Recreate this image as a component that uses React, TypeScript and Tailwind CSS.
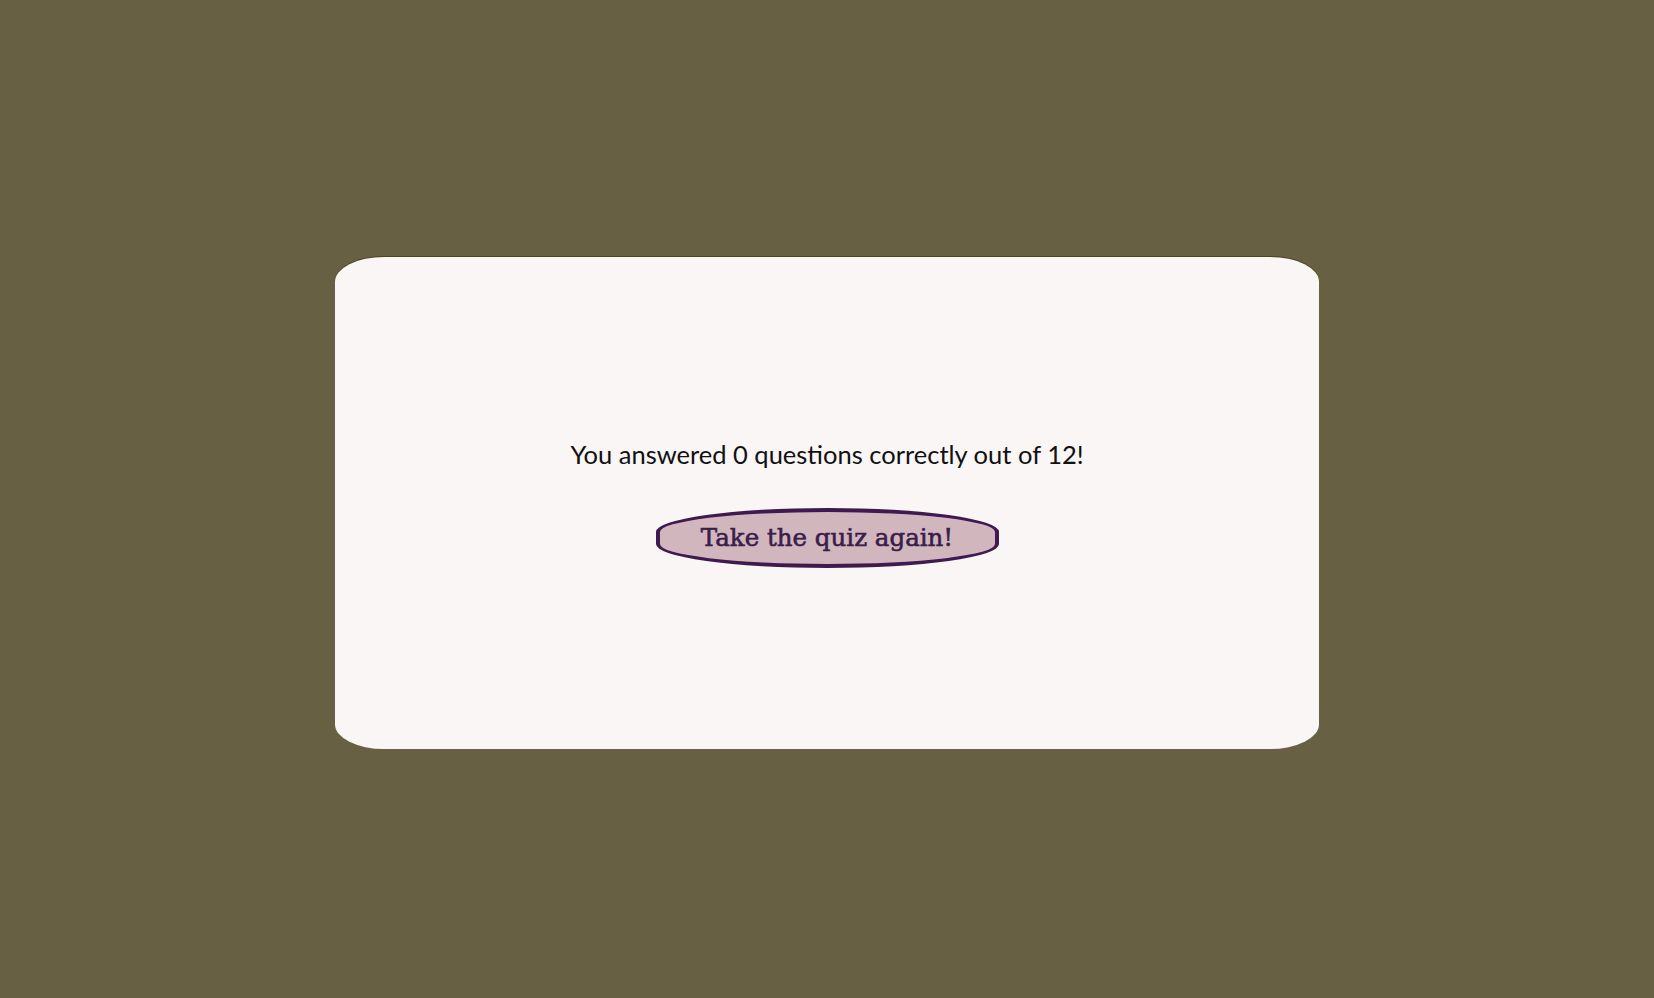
export default function App() {
  return (
    <div className="min-h-screen w-full bg-[#676043] flex items-center justify-center">
      <div className="mt-[8px] w-[984px] h-[492px] bg-[#f9f6f5] rounded-[5%] shadow-[0_-1px_0_#4a4420] flex flex-col items-center justify-center">
        <p className="font-['Lato',sans-serif] text-[25.5px] leading-[36px] text-[#111]">
          You answered 0 questions correctly out of 12!
        </p>
        <button className="mt-[36px] mb-[2px] w-[343px] h-[60px] rounded-[50%/40%] border-4 border-[#3e1a50] bg-[#d1b6be] font-['DejaVu_Serif',serif] text-[24.5px] [-webkit-text-stroke:0.6px_#3b1d4a] text-[#3b1d4a]">
          Take the quiz again!
        </button>
      </div>
    </div>
  );
}
